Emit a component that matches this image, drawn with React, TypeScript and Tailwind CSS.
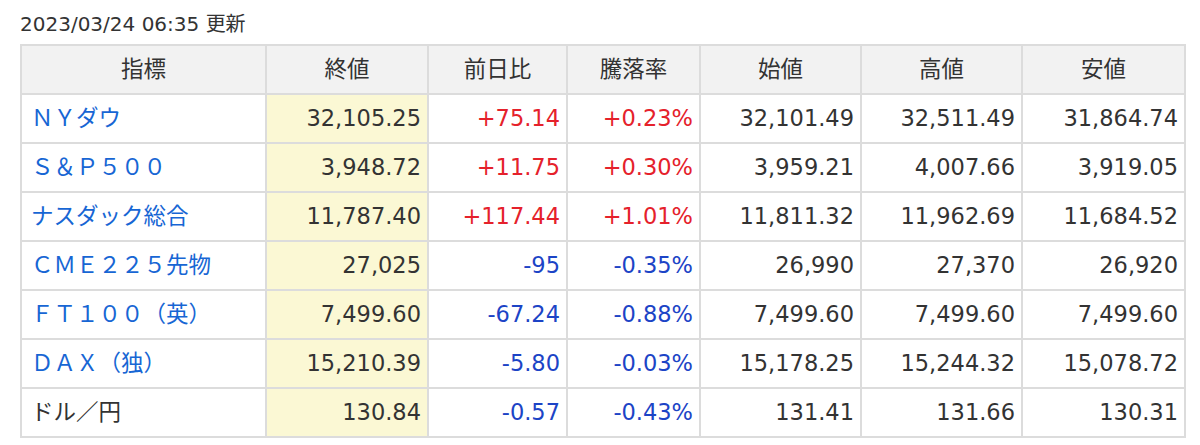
import React from "react";

type Row = {
  name: string;
  link: boolean;
  close: string;
  change: string;
  rate: string;
  open: string;
  high: string;
  low: string;
};

const rows: Row[] = [
  { name: "ＮＹダウ", link: true, close: "32,105.25", change: "+75.14", rate: "+0.23%", open: "32,101.49", high: "32,511.49", low: "31,864.74" },
  { name: "Ｓ＆Ｐ５００", link: true, close: "3,948.72", change: "+11.75", rate: "+0.30%", open: "3,959.21", high: "4,007.66", low: "3,919.05" },
  { name: "ナスダック総合", link: true, close: "11,787.40", change: "+117.44", rate: "+1.01%", open: "11,811.32", high: "11,962.69", low: "11,684.52" },
  { name: "ＣＭＥ２２５先物", link: true, close: "27,025", change: "-95", rate: "-0.35%", open: "26,990", high: "27,370", low: "26,920" },
  { name: "ＦＴ１００（英）", link: true, close: "7,499.60", change: "-67.24", rate: "-0.88%", open: "7,499.60", high: "7,499.60", low: "7,499.60" },
  { name: "ＤＡＸ（独）", link: true, close: "15,210.39", change: "-5.80", rate: "-0.03%", open: "15,178.25", high: "15,244.32", low: "15,078.72" },
  { name: "ドル／円", link: false, close: "130.84", change: "-0.57", rate: "-0.43%", open: "131.41", high: "131.66", low: "130.31" },
];

const headers = ["指標", "終値", "前日比", "騰落率", "始値", "高値", "安値"];

const changeColor = (v: string) => (v.startsWith("+") ? "text-[#e5212b]" : "text-[#1c44c6]");

export default function App() {
  return (
    <div className="h-[445px] w-[1200px] bg-white px-5 font-['DejaVu_Sans','Noto_Sans_CJK_JP',sans-serif] text-[#333]">
      <p className="pt-[12px] text-[20px] leading-[24px]">2023/03/24 06:35 更新</p>

      <table className="mt-[8px] w-[1164px] table-fixed border-collapse border-2 border-[#dcdcdc] text-[22.5px]">
        <colgroup>
          <col className="w-[245px]" />
          <col className="w-[162px]" />
          <col className="w-[139px]" />
          <col className="w-[133px]" />
          <col className="w-[161px]" />
          <col className="w-[161px]" />
          <col className="w-[163px]" />
        </colgroup>
        <thead>
          <tr className="h-[49px] bg-[#f2f2f2]">
            {headers.map((h) => (
              <th key={h} className="border-2 border-[#dcdcdc] p-0 text-center font-normal">
                {h}
              </th>
            ))}
          </tr>
        </thead>
        <tbody>
          {rows.map((r) => (
            <tr key={r.name} className="h-[49px]">
              <td className={`border-2 border-[#dcdcdc] pl-[9px] ${r.link ? "text-[#1766d4]" : "text-[#333]"}`}>
                {r.name}
              </td>
              <td className="border-2 border-[#dcdcdc] bg-[#fbf8d4] pr-[6px] text-right">{r.close}</td>
              <td className={`border-2 border-[#dcdcdc] pr-[6px] text-right ${changeColor(r.change)}`}>{r.change}</td>
              <td className={`border-2 border-[#dcdcdc] pr-[6px] text-right ${changeColor(r.rate)}`}>{r.rate}</td>
              <td className="border-2 border-[#dcdcdc] pr-[6px] text-right">{r.open}</td>
              <td className="border-2 border-[#dcdcdc] pr-[6px] text-right">{r.high}</td>
              <td className="border-2 border-[#dcdcdc] pr-[6px] text-right">{r.low}</td>
            </tr>
          ))}
        </tbody>
      </table>
    </div>
  );
}
